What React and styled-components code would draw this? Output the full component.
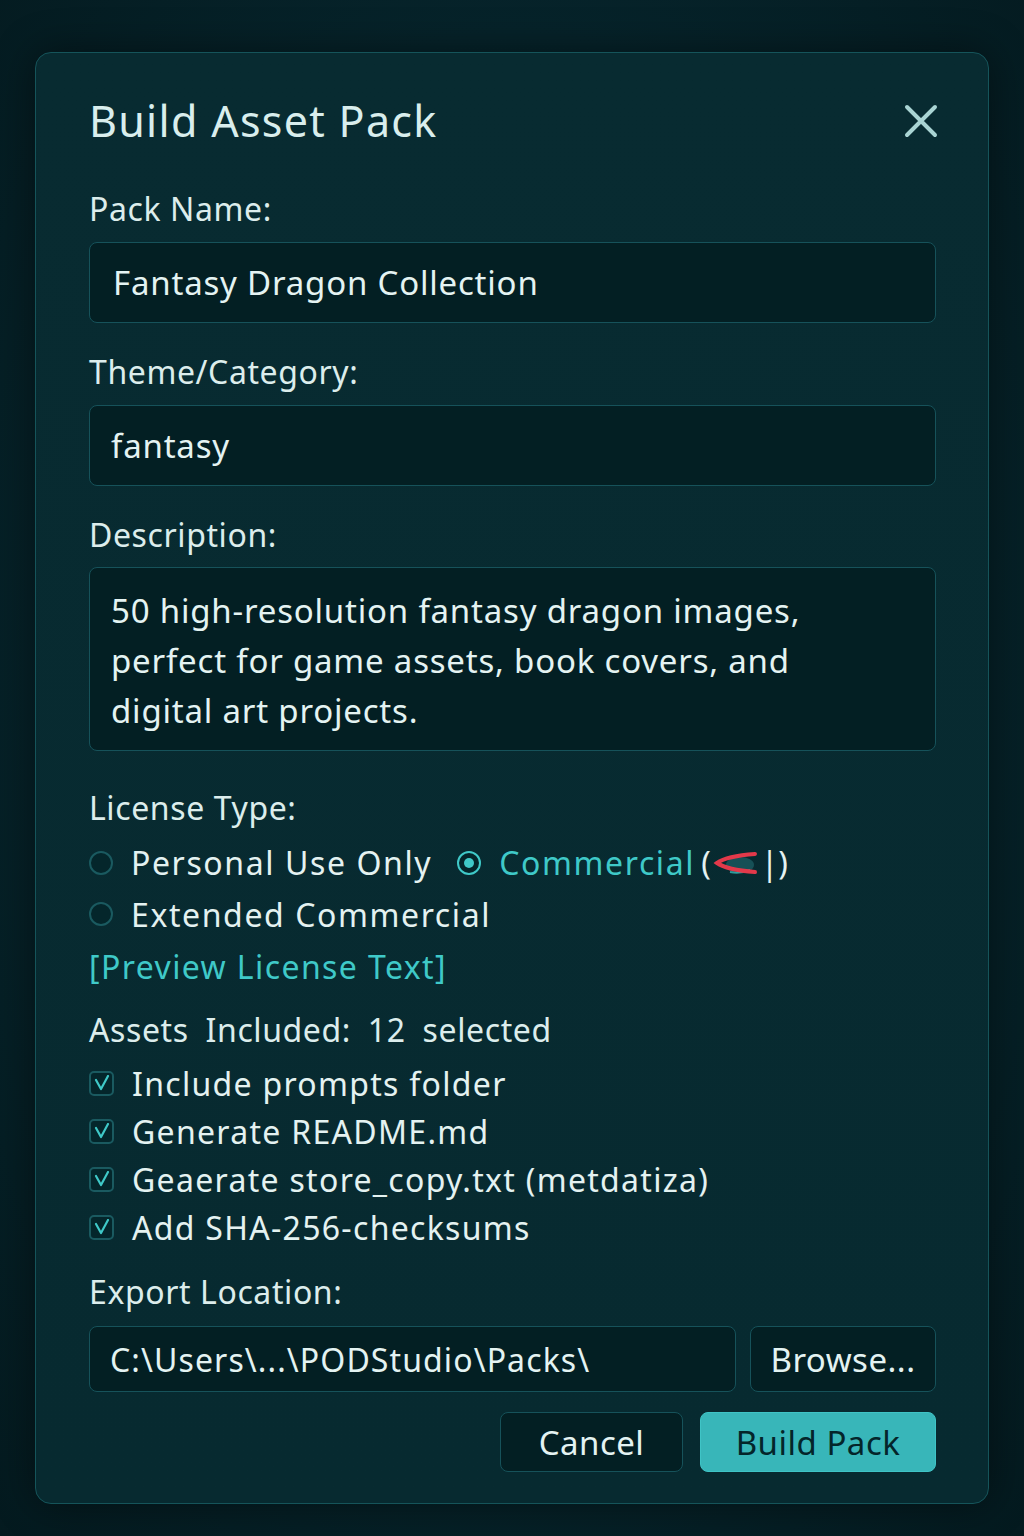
import React from "react";
import styled, { createGlobalStyle } from "styled-components";

const Global = createGlobalStyle`
  html, body { margin: 0; padding: 0; }
  body {
    background: radial-gradient(ellipse at 50% 45%, #0a2c31 0%, #06232a 55%, #041a1f 100%);
    min-height: 1536px;
    font-family: "Noto Sans", Roboto, "Liberation Sans", sans-serif;
    color: #e2f2f1;
  }
`;

const Page = styled.div`
  width: 1024px;
  height: 1536px;
  padding-top: 52px;
  box-sizing: border-box;
`;

const Card = styled.div`
  width: 954px;
  margin: 0 0 0 35px;
  box-sizing: border-box;
  background: linear-gradient(180deg, #082b31 0%, #072a30 100%);
  border: 1.5px solid #15545a;
  border-radius: 16px;
  box-shadow: 0 0 40px rgba(0, 0, 0, 0.45);
  padding: 40px 52px 31px 53px;
  display: flex;
  flex-direction: column;
`;

const Header = styled.div`
  display: flex;
  align-items: center;
  justify-content: space-between;
  height: 56px;
  margin-bottom: 40px;
`;

const Title = styled.h1`
  margin: 0;
  font-size: 43px;
  line-height: 56px;
  font-weight: 400;
  color: #d9eeed;
  letter-spacing: 1.3px;
`;

const CloseBtn = styled.button`
  background: none;
  border: none;
  padding: 0;
  margin-right: -5px;
  width: 40px;
  height: 40px;
  display: flex;
  align-items: center;
  justify-content: center;
  cursor: pointer;
`;

const Label = styled.div`
  font-size: 32px;
  line-height: 40px;
  color: #dcedec;
  letter-spacing: 0.6px;
  word-spacing: ${(p) => p.$ws || 0}px;
  margin-top: ${(p) => p.$mt || 0}px;
`;

const TextBox = styled.div`
  margin-top: ${(p) => p.$mt ?? 13}px;
  height: ${(p) => p.$h || 81}px;
  box-sizing: border-box;
  background: #031f23;
  border: 1.5px solid #16525a;
  border-radius: 8px;
  padding: ${(p) => p.$pad || "0 0 0 23px"};
  display: flex;
  align-items: ${(p) => (p.$multi ? "flex-start" : "center")};
  font-size: 33px;
  line-height: 50px;
  color: #e4f3f2;
  letter-spacing: 0.8px;
`;

const RadioGroup = styled.div`
  margin-top: 9px;
  display: flex;
  flex-direction: column;
`;

const Row = styled.div`
  display: flex;
  align-items: center;
  height: ${(p) => p.$h || 51}px;
`;

const Option = styled.div`
  display: flex;
  align-items: center;
  gap: 18px;
  margin-right: 25px;
  font-size: 32px;
  letter-spacing: 1.6px;
  color: ${(p) => (p.$active ? "#3fc9c8" : "#e4f2f1")};
`;

const Radio = styled.span`
  width: 24px;
  height: 24px;
  border-radius: 50%;
  box-sizing: border-box;
  border: 2px solid ${(p) => (p.$on ? "#3fc9c8" : "#1a5a60")};
  background: #04262b;
  display: flex;
  align-items: center;
  justify-content: center;
  flex-shrink: 0;
  &::after {
    content: "";
    display: ${(p) => (p.$on ? "block" : "none")};
    width: 10px;
    height: 10px;
    border-radius: 50%;
    background: #3fc9c8;
  }
`;

const Paren = styled.span`
  color: #e4f2f1;
  display: inline-flex;
  align-items: center;
  gap: 2px;
  margin-left: -12px;
  letter-spacing: 0;
`;

const Link = styled.a`
  font-size: 32px;
  color: #3fc9c8;
  letter-spacing: 1.4px;
  text-decoration: none;
  cursor: pointer;
`;

const CheckList = styled.div`
  margin-top: 9px;
  display: flex;
  flex-direction: column;
`;

const CheckRow = styled.div`
  display: flex;
  align-items: center;
  gap: 18px;
  height: 48px;
  font-size: 32px;
  letter-spacing: 1.3px;
  color: #e4f2f1;
`;

const Box = styled.span`
  width: 25px;
  height: 25px;
  box-sizing: border-box;
  border: 2px solid #1a5a60;
  border-radius: 5px;
  background: #04262b;
  display: flex;
  align-items: center;
  justify-content: center;
  flex-shrink: 0;
`;

const PathRow = styled.div`
  margin-top: 14px;
  display: flex;
  gap: 14px;
  height: 66px;
`;

const PathInput = styled.div`
  flex: 1;
  box-sizing: border-box;
  background: #031f23;
  border: 1.5px solid #16525a;
  border-radius: 8px;
  padding-left: 20px;
  display: flex;
  align-items: center;
  font-size: 32px;
  letter-spacing: 1.1px;
  color: #e4f3f2;
`;

const Button = styled.button`
  box-sizing: border-box;
  width: ${(p) => p.$w}px;
  height: ${(p) => p.$h || 60}px;
  border-radius: 8px;
  font-family: inherit;
  font-size: 33px;
  cursor: pointer;
  display: flex;
  align-items: center;
  justify-content: center;
  padding: 0;
  background: ${(p) => (p.$primary ? "#38b6b9" : "#031f23")};
  color: ${(p) => (p.$primary ? "#04252a" : "#e4f3f2")};
  border: 1.5px solid ${(p) => (p.$primary ? "#3fc4c6" : "#16525a")};
  letter-spacing: 0.5px;
`;

const Actions = styled.div`
  margin-top: 20px;
  display: flex;
  justify-content: flex-end;
  gap: 17px;
`;

const Check = () => (
  <svg width="16" height="16" viewBox="0 0 16 16" fill="none">
    <path d="M2 5 L7 14 L14 1" stroke="#3fc9c8" strokeWidth="2.2" strokeLinecap="round" strokeLinejoin="round" />
  </svg>
);

const Scribble = () => (
  <svg width="46" height="30" viewBox="0 0 46 30" fill="none">
    <ellipse cx="27" cy="17" rx="14" ry="8" fill="#2b7f86" opacity="0.45" />
    <path d="M17 24 Q27 26 37 22" stroke="#3fc9c8" strokeWidth="2" opacity="0.7" fill="none" />
    <path d="M42 6 Q14 8 4 15 Q14 22 42 24" stroke="#e3394a" strokeWidth="4" strokeLinecap="round" fill="none" />
  </svg>
);

export default function App() {
  const checks = [
    "Include prompts folder",
    "Generate README.md",
    "Geaerate store_copy.txt (metdatiza)",
    "Add SHA-256-checksums",
  ];
  return (
    <>
      <Global />
      <Page>
        <Card>
          <Header>
            <Title>Build Asset Pack</Title>
            <CloseBtn aria-label="Close">
              <svg width="34" height="34" viewBox="0 0 34 34">
                <path d="M3 3 L31 31 M31 3 L3 31" stroke="#a9d4d3" strokeWidth="4" strokeLinecap="round" />
              </svg>
            </CloseBtn>
          </Header>

          <Label>Pack Name:</Label>
          <TextBox>Fantasy Dragon Collection</TextBox>

          <Label $mt={29}>Theme/Category:</Label>
          <TextBox $pad="0 0 0 21px">fantasy</TextBox>

          <Label $mt={29}>Description:</Label>
          <TextBox $mt={12} $h={184} $multi $pad="18px 80px 0 21px">
            50 high-resolution fantasy dragon images, perfect for game assets, book covers, and digital art projects.
          </TextBox>

          <Label $mt={37}>License Type:</Label>
          <RadioGroup>
            <Row>
              <Option>
                <Radio />
                Personal Use Only
              </Option>
              <Option $active>
                <Radio $on />
                <span>Commercial </span>
                <Paren>
                  (<Scribble />|)
                </Paren>
              </Option>
            </Row>
            <Row $h={52}>
              <Option>
                <Radio />
                Extended Commercial
              </Option>
            </Row>
            <Row $h={52}>
              <Link>[Preview License Text]</Link>
            </Row>
          </RadioGroup>

          <Label $mt={18} $ws={8}>Assets Included: 12 selected</Label>
          <CheckList>
            {checks.map((c) => (
              <CheckRow key={c}>
                <Box>
                  <Check />
                </Box>
                {c}
              </CheckRow>
            ))}
          </CheckList>

          <Label $mt={21}>Export Location:</Label>
          <PathRow>
            <PathInput>C:\Users\...\PODStudio\Packs\</PathInput>
            <Button $w={186} $h={66}>Browse...</Button>
          </PathRow>

          <Actions>
            <Button $w={183}>Cancel</Button>
            <Button $w={236} $primary>Build Pack</Button>
          </Actions>
        </Card>
      </Page>
    </>
  );
}
